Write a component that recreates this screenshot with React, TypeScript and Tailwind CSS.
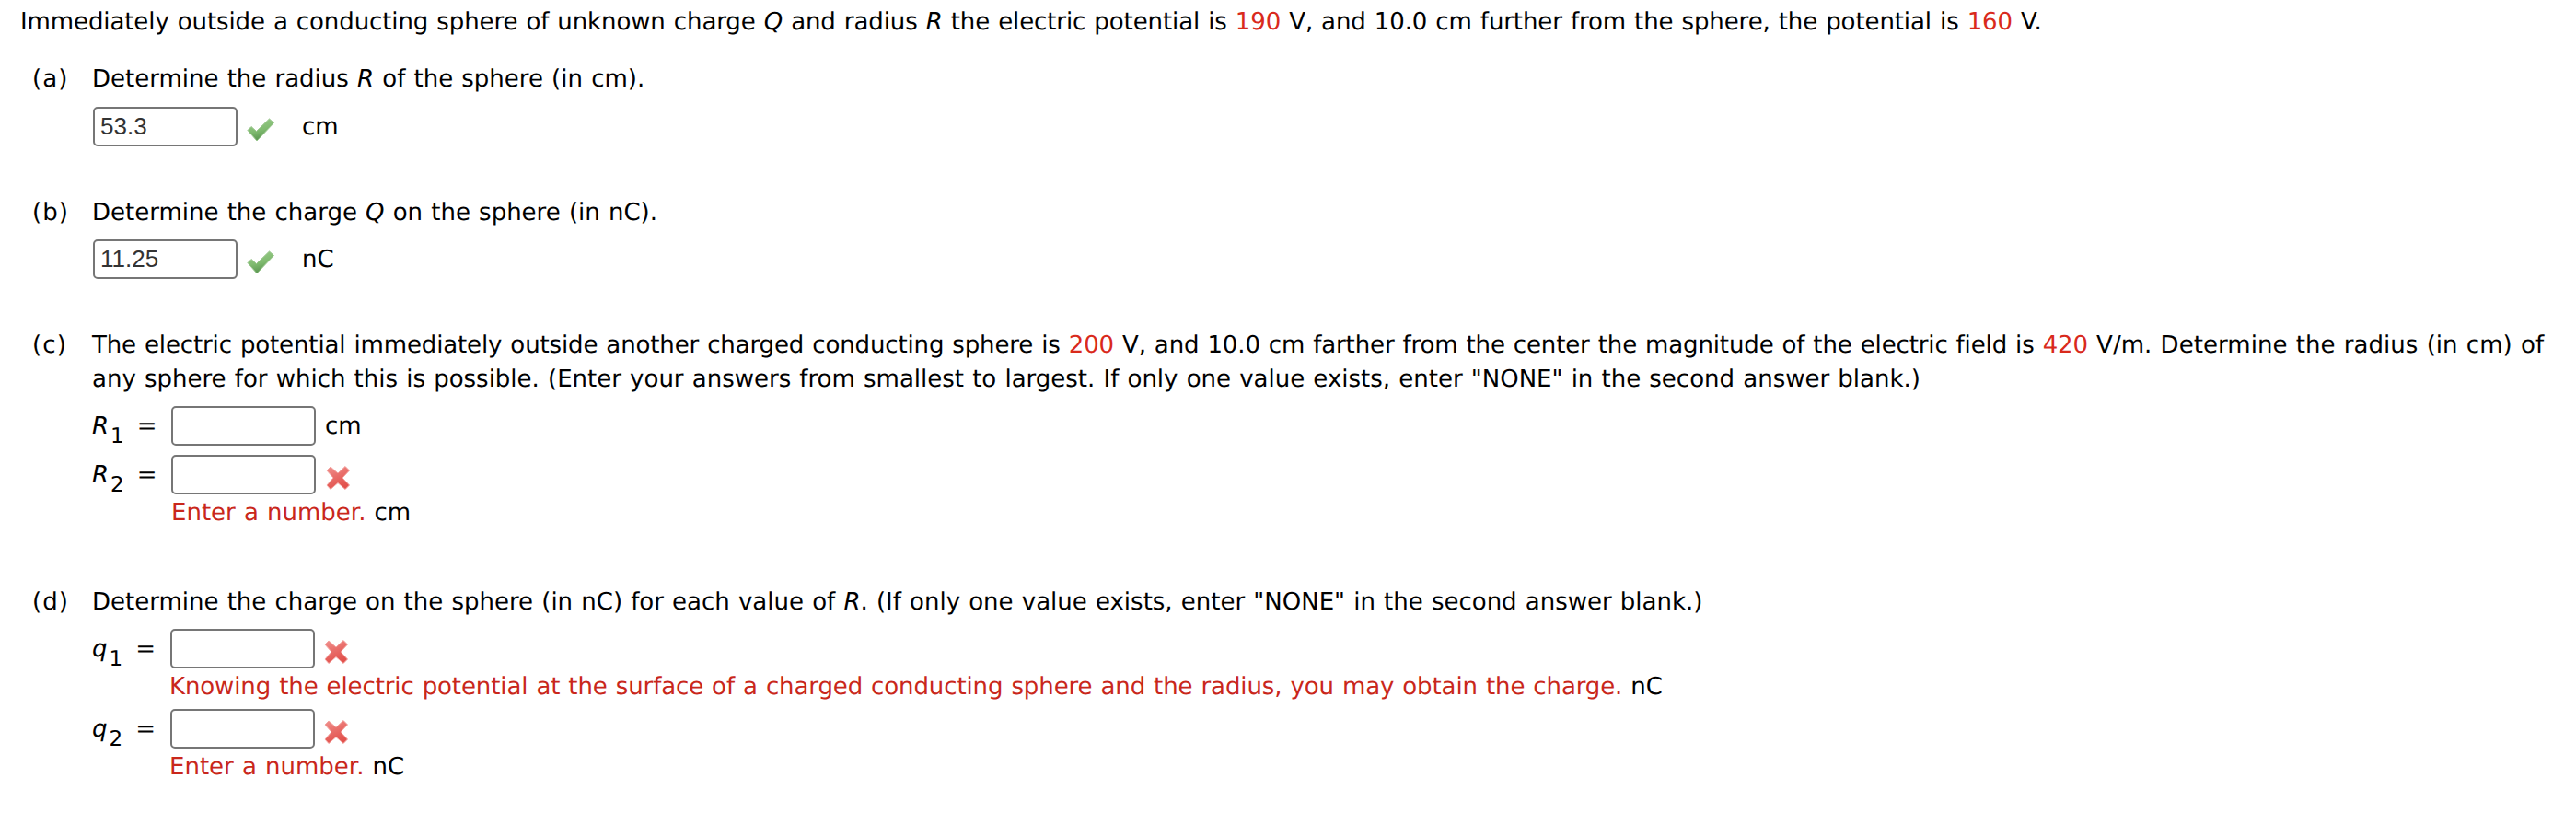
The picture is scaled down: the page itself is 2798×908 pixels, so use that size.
import type { ReactNode } from "react";

function CheckMark() {
  return (
    <svg viewBox="0 0 32 28" className="w-8 h-7 shrink-0">
      <defs>
        <linearGradient id="check" x1="0" y1="0" x2="0.3" y2="1">
          <stop offset="0" stopColor="#9ccb8c" />
          <stop offset="0.6" stopColor="#80bb70" />
          <stop offset="1" stopColor="#5a9650" />
        </linearGradient>
      </defs>
      <path d="M2 14.5 L6 10.5 L11.5 15.5 L25.5 2 L30.5 6.5 L12 26 Z" fill="url(#check)" stroke="#9cc890" strokeWidth="1" strokeLinejoin="round" />
    </svg>
  );
}

function CrossMark() {
  return (
    <svg viewBox="0 0 28 28" className="w-7 h-7 shrink-0">
      <defs>
        <linearGradient id="cross" x1="0" y1="0" x2="0.4" y2="1">
          <stop offset="0" stopColor="#f09390" />
          <stop offset="0.5" stopColor="#e96e6a" />
          <stop offset="1" stopColor="#e2524d" />
        </linearGradient>
      </defs>
      <path d="M2 6 L6 2 L14 9 L22 1.5 L26.5 6 L19 14 L26.5 22 L22 26.5 L14 19.5 L6 26.5 L2 22 L9 14 Z" fill="url(#cross)" stroke="#f4a5a2" strokeWidth="1" strokeLinejoin="round" />
    </svg>
  );
}

function AnswerBox({ value = "" }: { value?: string }) {
  return (
    <input
      type="text"
      defaultValue={value}
      className="block w-[157px] h-[43px] shrink-0 border-2 border-[#767676] rounded-[5px] bg-white pl-1.5 font-['Liberation_Sans',Arial,sans-serif] text-[26px] tracking-normal text-[#333]"
    />
  );
}

function Num({ children }: { children: ReactNode }) {
  return <span className="text-[#d92a1c]">{children}</span>;
}

function Part({ label, className, children }: { label: string; className: string; children: ReactNode }) {
  return (
    <section className={`flex pl-[35px] ${className}`}>
      <div className="w-[65px] shrink-0 tracking-[1.1px]">({label})</div>
      <div className="flex-1">{children}</div>
    </section>
  );
}

function Variable({ name, index, width }: { name: string; index: number; width: string }) {
  return (
    <div className={`${width} shrink-0 h-[43px] pt-0.5 flex items-center whitespace-pre`}>
      <i>{name}</i>
      <span className="relative top-[11px] ml-0.5 text-[23px]">{index}</span>
      <span className="ml-3.5">=</span>
    </div>
  );
}

export default function App() {
  return (
    <main className="w-[2798px] h-[908px] bg-white text-black overflow-hidden font-['DejaVu_Sans',Verdana,sans-serif] text-[26px] leading-[37px] tracking-[0px] [word-spacing:0.9px] [text-rendering:geometricPrecision]">
      <p className="pt-1.5 pl-[22px] whitespace-nowrap tracking-[-0.1px]">
        Immediately outside a conducting sphere of unknown charge <i>Q</i> and radius <i>R</i> the electric potential is{" "}
        <Num>190</Num> V, and 10.0 cm further from the sphere, the potential is <Num>160</Num> V.
      </p>

      <Part label="a" className="mt-[25px]">
        <p>Determine the radius <i>R</i> of the sphere (in cm).</p>
        <div className="flex items-center mt-[11px] ml-px">
          <AnswerBox value="53.3" />
          <div className="ml-[9px] mt-[7px]"><CheckMark /></div>
          <span className="ml-[29px] pt-0.5">cm</span>
        </div>
      </Part>

      <Part label="b" className="mt-[54px]">
        <p>Determine the charge <i>Q</i> on the sphere (in nC).</p>
        <div className="flex items-center mt-2.5 ml-px">
          <AnswerBox value="11.25" />
          <div className="ml-[9px] mt-[7px]"><CheckMark /></div>
          <span className="ml-[29px] pt-0.5">nC</span>
        </div>
      </Part>

      <Part label="c" className="mt-[54px]">
        <p className="whitespace-nowrap">
          <span className="tracking-[-0.13px]">
            The electric potential immediately outside another charged conducting sphere is <Num>200</Num> V, and 10.0 cm
            farther from the center the magnitude of the electric field is <Num>420</Num>
          </span>{" "}
          <span className="tracking-[0.05px]">V/m. Determine the radius (in cm) of</span>
          <br />
          any sphere for which this is possible. (Enter your answers from smallest to largest. If only one value exists,
          enter "NONE" in the second answer blank.)
        </p>
        <div className="flex items-center mt-2.5">
          <Variable name="R" index={1} width="w-[86px]" />
          <AnswerBox />
          <span className="ml-[10px] pt-0.5">cm</span>
        </div>
        <div className="flex items-center mt-2.5">
          <Variable name="R" index={2} width="w-[86px]" />
          <AnswerBox />
          <div className="ml-[10px] mt-[6px]"><CrossMark /></div>
        </div>
        <p className="pt-0.5 pl-[86px]"><span className="text-[#c9271b]">Enter a number.</span> cm</p>
      </Part>

      <Part label="d" className="mt-[60px]">
        <p>
          Determine the charge on the sphere (in nC) for each value of <i>R</i>. (If only one value exists, enter "NONE" in
          the second answer blank.)
        </p>
        <div className="flex items-center mt-2.5">
          <Variable name="q" index={1} width="w-[85px]" />
          <AnswerBox />
          <div className="ml-[9px] mt-[6px]"><CrossMark /></div>
        </div>
        <p className="pt-0.5 pl-[84px] tracking-[-0.11px]">
          <span className="text-[#c9271b]">
            Knowing the electric potential at the surface of a charged conducting sphere and the radius, you may obtain the
            charge.
          </span>{" "}
          nC
        </p>
        <div className="flex items-center mt-[5px]">
          <Variable name="q" index={2} width="w-[85px]" />
          <AnswerBox />
          <div className="ml-[9px] mt-[6px]"><CrossMark /></div>
        </div>
        <p className="pt-0.5 pl-[84px]"><span className="text-[#c9271b]">Enter a number.</span> nC</p>
      </Part>
    </main>
  );
}
